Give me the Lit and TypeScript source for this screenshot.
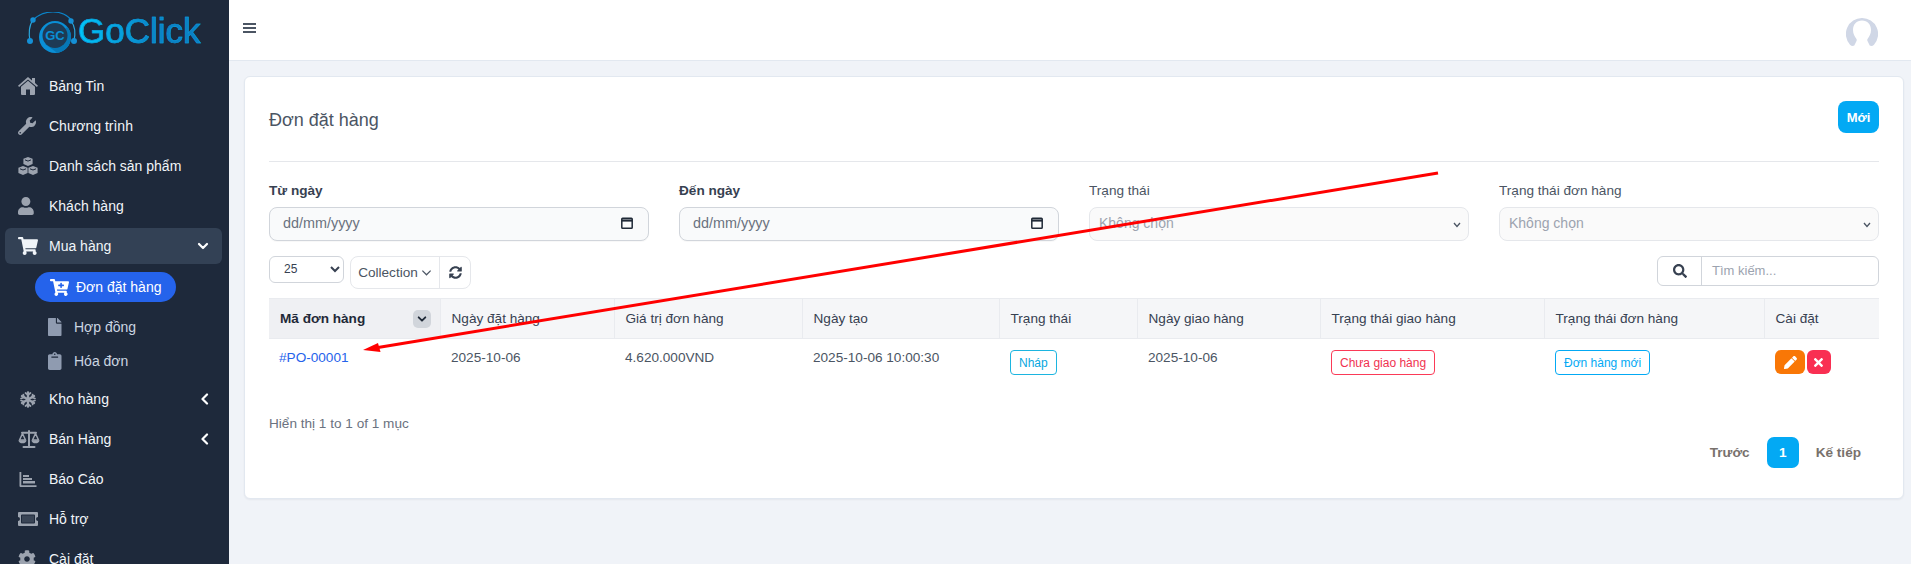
import { LitElement, html, css, svg } from "lit";
import { customElement } from "lit/decorators.js";

const FA = (vb: string, d: string, cls = "ic") =>
  html`<svg class=${cls} viewBox=${vb} preserveAspectRatio="xMinYMid meet" fill="currentColor"><path d=${d}></path></svg>`;

const CART = "M528.12 301.319l47.273-208C578.806 78.301 567.391 64 551.99 64H159.208l-9.166-44.81C147.758 8.021 137.93 0 126.529 0H24C10.745 0 0 10.745 0 24v16c0 13.255 10.745 24 24 24h69.883l70.248 343.435C147.325 417.1 136 435.222 136 456c0 30.928 25.072 56 56 56s56-25.072 56-56c0-15.674-6.447-29.835-16.824-40h209.647C430.447 426.165 424 440.326 424 456c0 30.928 25.072 56 56 56s56-25.072 56-56c0-22.172-12.888-41.332-31.579-50.405l5.517-24.276c3.413-15.018-8.002-29.319-23.403-29.319H218.117l-6.545-32h293.145c11.206 0 20.92-7.754 23.403-18.681z";
const CARTPLUS = "M504.717 320H211.572l6.545 32h268.418c15.401 0 26.816 14.301 23.403 29.319l-5.517 24.276C523.112 414.668 536 433.828 536 456c0 31.202-25.519 56.444-56.824 55.994-29.823-.429-54.35-24.631-55.155-54.447-.44-16.287 6.085-31.049 16.803-41.548H231.176C241.553 426.165 248 440.326 248 456c0 31.813-26.528 57.431-58.67 55.938-28.54-1.325-51.751-24.385-53.251-52.917-1.158-22.034 10.436-41.455 28.051-51.586L93.883 64H24C10.745 64 0 53.255 0 40V24C0 10.745 10.745 0 24 0h102.529c11.401 0 21.228 8.021 23.513 19.19L159.208 64H551.99c15.401 0 26.816 14.301 23.403 29.319l-47.273 208C525.637 312.246 515.923 320 504.717 320zM408 168h-48v-40c0-8.837-7.163-16-16-16h-16c-8.837 0-16 7.163-16 16v40h-48c-8.837 0-16 7.163-16 16v16c0 8.837 7.163 16 16 16h48v40c0 8.837 7.163 16 16 16h16c8.837 0 16-7.163 16-16v-40h48c8.837 0 16-7.163 16-16v-16c0-8.837-7.163-16-16-16z";

const icons: Record<string, unknown> = {
  home: html`<svg class="ic" viewBox="0 0 20 18" fill="currentColor"><path d="M10 0l4 3.400V1h3v5l3 2.700-1.100 1.300L10 2.400 1.100 10 0 8.700z"></path><path d="M10 3.800l7 6V17a1 1 0 0 1-1 1h-4v-5.500H8V18H4a1 1 0 0 1-1-1V9.800z"></path></svg>`,
  wrench: FA("0 0 512 512", "M507.73 109.1c-2.24-9.03-13.54-12.09-20.12-5.51l-74.36 74.36-67.88-11.31-11.31-67.88 74.36-74.36c6.62-6.62 3.43-17.9-5.66-20.16-47.38-11.74-99.55.91-136.58 37.93-39.64 39.64-50.55 97.1-34.05 147.2L18.74 402.76c-24.99 24.99-24.99 65.51 0 90.5 24.99 24.99 65.51 24.99 90.5 0l213.21-213.21c50.12 16.71 107.47 5.68 147.37-34.22 37.07-37.07 49.7-89.32 37.91-136.73zM64 472c-13.25 0-24-10.75-24-24 0-13.26 10.75-24 24-24s24 10.74 24 24c0 13.25-10.75 24-24 24z"),
  cubes: html`<svg class="ic" viewBox="0 .5 20 18" fill="currentColor"><path d="M10 .5l4.600 1.800v5.200L10 9.400 5.400 7.500V2.300z M5 9.500l4.600 1.800v5.300L5 18.500.4 16.600v-5.300z M15 9.500l4.600 1.800v5.300L15 18.500l-4.600-1.900v-5.300z"></path><path d="M7 3.400L10 4.600l3-1.200M2 12.300L5 13.500l3-1.200M12 12.300l3 1.200 3-1.200" fill="none" stroke="#1e293b" stroke-width="1"></path></svg>`,
  user: FA("0 0 448 512", "M224 256c70.7 0 128-57.3 128-128S294.7 0 224 0 96 57.3 96 128s57.3 128 128 128zm89.6 32h-16.7c-22.2 10.2-46.9 16-72.9 16s-50.6-5.8-72.9-16h-16.7C60.2 288 0 348.2 0 422.4V464c0 26.500 21.500 48 48 48h352c26.500 0 48-21.500 48-48v-41.600c0-74.200-60.200-134.400-134.400-134.400z"),
  cart: FA("0 0 576 512", CART),
  snow: html`<svg class="ic snow" viewBox="0 0 16 17" fill="none" stroke="currentColor" stroke-width="2.400" stroke-linecap="round"><path d="M8 1.500v14M2 5l12 7M14 5L2 12"></path><path d="M5.500 2L8 4l2.500-2M5.500 15L8 13l2.500 2M1 7.500l3-1-.7-3M15 7.500l-3-1 .7-3M1 9.500l3 1-.7 3M15 9.500l-3 1 .7 3" stroke-width="1.700"></path></svg>`,
  scale: html`<svg class="ic scale" viewBox="0 0 22 18" fill="none" stroke="currentColor" stroke-width="1.500" stroke-linejoin="round"><path d="M11 1v15M5.500 17h11M4 2.800h14" stroke-width="2" stroke-linecap="round"></path><path d="M4.500 3.500L1.500 10h6zM17.500 3.500l-3 6.500h6z"></path><path d="M.5 10.200h8c0 2-1.800 3.100-4 3.100s-4-1.100-4-3.100zM13.500 10.200h8c0 2-1.800 3.100-4 3.100s-4-1.100-4-3.100z" fill="currentColor" stroke="none"></path></svg>`,
  chart: html`<svg class="ic chart" viewBox="0 0 17 15" fill="currentColor"><path d="M0 0h1.800v13.200H17V15H1a1 1 0 0 1-1-1z"></path><rect x="3.500" y="3" width="6" height="2"></rect><rect x="3.500" y="6" width="9" height="2"></rect><rect x="3.500" y="9" width="12" height="2.500"></rect></svg>`,
  ticket: html`<svg class="ic ticket" viewBox="0 0 20 14"><path fill="currentColor" fill-rule="evenodd" d="M1 0h18a1 1 0 0 1 1 1v4a2 2 0 0 0 0 4v4a1 1 0 0 1-1 1H1a1 1 0 0 1-1-1V9a2 2 0 0 0 0-4V1a1 1 0 0 1 1-1zM4 2.500a1 1 0 0 0-1 1v7a1 1 0 0 0 1 1h12a1 1 0 0 0 1-1v-7a1 1 0 0 0-1-1z"></path><rect x="4" y="3.500" width="12" height="7" fill="#3a4556"></rect></svg>`,
  cog: FA("0 0 512 512", "M487.400 315.700l-42.600-24.600c4.300-23.200 4.300-47 0-70.200l42.600-24.600c4.900-2.800 7.100-8.600 5.500-14-11.100-35.600-30-67.800-54.700-94.600-3.800-4.100-10-5.100-14.800-2.300L380.800 110c-17.900-15.400-38.500-27.300-60.800-35.100V25.800c0-5.600-3.900-10.500-9.400-11.700-36.700-8.200-74.300-7.800-109.200 0-5.500 1.200-9.400 6.100-9.400 11.700V75c-22.200 7.900-42.800 19.800-60.800 35.100L88.700 85.500c-4.900-2.800-11-1.900-14.800 2.300-24.700 26.700-43.600 58.900-54.700 94.600-1.700 5.400.6 11.200 5.500 14L67.300 221c-4.300 23.200-4.300 47 0 70.200l-42.600 24.600c-4.900 2.800-7.100 8.600-5.500 14 11.100 35.600 30 67.800 54.700 94.600 3.800 4.100 10 5.100 14.800 2.300l42.600-24.600c17.900 15.400 38.500 27.300 60.800 35.100v49.200c0 5.600 3.900 10.500 9.400 11.700 36.700 8.200 74.300 7.800 109.200 0 5.500-1.200 9.400-6.100 9.400-11.700v-49.200c22.200-7.900 42.800-19.800 60.800-35.100l42.600 24.600c4.900 2.800 11 1.900 14.800-2.300 24.700-26.700 43.600-58.900 54.700-94.600 1.500-5.500-.7-11.300-5.600-14.100zM256 336c-44.100 0-80-35.900-80-80s35.900-80 80-80 80 35.900 80 80-35.900 80-80 80z"),
};

const chevDown = html`<svg class="chev" viewBox="0 0 12 12" fill="none" stroke="currentColor" stroke-width="2.200" stroke-linecap="round" stroke-linejoin="round"><path d="M2 4l4 4 4-4"></path></svg>`;
const chevLeft = html`<svg class="chev left" viewBox="0 0 12 12" fill="none" stroke="currentColor" stroke-width="2.200" stroke-linecap="round" stroke-linejoin="round"><path d="M8 1.500L3.500 6 8 10.500"></path></svg>`;
const calendar = html`<svg class="cal" viewBox="0 0 14 14" fill="none" stroke="#1f2937" stroke-width="1.500"><rect x="1.800" y="2.200" width="10.400" height="10" rx=".8"></rect><path d="M1.800 4.500h10.400" stroke-width="2.200"></path></svg>`;
const selChev = html`<svg class="selchev" viewBox="0 0 8 6" fill="none" stroke="#4b5563" stroke-width="1.300"><path d="M1 1l3 3.500L7 1"></path></svg>`;

const nav = [
  ["home", "Bảng Tin"],
  ["wrench", "Chương trình"],
  ["cubes", "Danh sách sản phẩm"],
  ["user", "Khách hàng"],
];
const cols = [171, 174, 188, 197, 138, 183, 224, 220, 115];
const heads = ["Ngày đặt hàng", "Giá trị đơn hàng", "Ngày tạo", "Trạng thái", "Ngày giao hàng", "Trạng thái giao hàng", "Trạng thái đơn hàng", "Cài đặt"];

@customElement("app-root")
export class AppRoot extends LitElement {
  static styles = css`
    :host { display: flex; height: 564px; overflow: hidden; background: #f0f3f8; font-family: "Liberation Sans", Arial, sans-serif; font-size: 14px; color: #374151; position: relative; }
    * { box-sizing: border-box; }
    .side { width: 229px; flex: none; background: #1e293b; color: #f1f5f9; overflow: hidden; }
    .logo { height: 66px; display: flex; align-items: flex-start; padding: 12px 0 0 27px; }
    .logo svg { width: 51px; height: 42px; flex: none; }
    .logo span { font-size: 35px; font-weight: 400; line-height: 40px; margin-top: -1px; -webkit-text-stroke: .6px #0a9ad8; background: linear-gradient(90deg, #00c8fb, #0a84c8 60%, #0b7fc4); -webkit-background-clip: text; background-clip: text; color: transparent; }
    .item { height: 40px; display: flex; align-items: center; padding-left: 18px; }
    .ic { width: 20px; height: 18px; color: #9ca3af; flex: none; display: block; }
    .ic.snow { height: 17px; }
    .ic.scale { width: 22px; }
    .ic.chart { height: 15px; }
    .ic.ticket { height: 14px; }
    .item .lab { margin-left: 11px; flex: 1; }
    .item .ic.scale + .lab { margin-left: 9px; }
    .chev { width: 12px; height: 12px; margin-right: 20px; color: #fff; flex: none; }
    .chev.left { margin-right: 18px; }
    .open { height: 36px; margin: 2px 7px 2px 5px; padding: 0 0 1px 13px; background: #334155; border-radius: 6px; }
    .open .ic { color: #f1f5f9; }
    .open .chev { margin-right: 13px; }
    .sub { padding: 6px 0 1px; }
    .pill { width: 141px; height: 30px; margin: 0 0 8px 35px; padding-left: 15px; display: flex; align-items: center; gap: 7px; border-radius: 15px; background: #2563eb; color: #fff; }
    .pill .ic { width: 19px; height: 17px; color: #fff; }
    .subitem { height: 34px; display: flex; align-items: center; padding-left: 48px; color: #cbd5e1; }
    .subitem .ic { width: 14px; height: 18px; color: #8f9bb0; }
    .subitem span { margin-left: 12px; }
    .main { flex: 1; min-width: 0; display: flex; flex-direction: column; }
    .top { height: 61px; flex: none; background: #fff; border-bottom: 1px solid #e2e8f0; display: flex; align-items: center; justify-content: space-between; padding: 0 33px 0 14px; }
    .burger { width: 13px; display: flex; flex-direction: column; gap: 2.500px; margin-top: -4px; }
    .burger i { display: block; height: 1.500px; background: #4b5563; }
    .avatar { width: 32px; height: 28px; display: block; margin-top: 3px; }
    .wrap { padding: 15px 7px 0 15px; }
    .card { height: 423px; background: #fff; border: 1px solid #e2e8f0; border-radius: 6px; padding: 24px 24px 0; box-shadow: 0 1px 2px rgba(15,23,42,.05); }
    .head { display: flex; justify-content: space-between; padding-bottom: 28px; border-bottom: 1px solid #e5e7eb; }
    .title { font-size: 18px; line-height: 22px; margin-top: 8px; color: #4b5563; }
    .new { width: 41px; height: 32px; border: 0; border-radius: 8px; background: #03a9f4; color: #fff; font: 700 13px "Liberation Sans", Arial, sans-serif; padding: 0; }
    .filters { display: grid; grid-template-columns: repeat(4, 380px); gap: 30px; margin-top: 19px; font-size: 13.600px; }
    .fld label { display: block; line-height: 20px; margin-bottom: 6px; color: #4b5563; }
    .fld label.b { font-weight: 700; color: #374151; }
    .inp { height: 34px; border: 1px solid #d1d5db; border-radius: 8px; background: #f9fafb; display: flex; align-items: center; justify-content: space-between; padding: 0 14px 2px 13px; color: #6b7280; font-size: 14.400px; box-shadow: 0 1px 1px rgba(0,0,0,.03); }
    .cal { width: 14px; height: 14px; }
    .selwrap { position: relative; }
    .selwrap select { appearance: none; width: 100%; height: 34px; border: 1px solid #e5e7eb; border-radius: 8px; background: #fafafa; color: #9ca3af; font: 14px "Liberation Sans", Arial, sans-serif; padding: 0 20px 3px 9px; }
    .selchev { position: absolute; right: 8px; top: 15px; width: 8px; height: 6px; }
    .bar { display: flex; align-items: flex-start; margin-top: 15px; }
    .size { width: 75px; height: 27px; border: 1px solid #d1d5db; border-radius: 6px; background: #fff; color: #374151; font: 12px "Liberation Sans", Arial, sans-serif; padding: 0 0 2px 10px; }
    .group { display: flex; height: 33px; margin-left: 6px; border: 1px solid #e5e7eb; border-radius: 8px; align-items: center; font-size: 13.600px; }
    .coll { width: 89px; height: 100%; display: flex; align-items: center; justify-content: center; gap: 3px; border-right: 1px solid #e5e7eb; color: #4b5563; }
    .coll svg { width: 11px; height: 11px; }
    .refresh { width: 30px; display: flex; justify-content: center; color: #374151; }
    .refresh svg { width: 13px; height: 13px; }
    .search { margin-left: auto; width: 222px; height: 30px; display: flex; border: 1px solid #d1d5db; border-radius: 6px; }
    .search .mag { width: 44px; display: flex; align-items: center; justify-content: center; border-right: 1px solid #d1d5db; color: #374151; }
    .search .mag svg { width: 14px; height: 14px; }
    .search .ph { padding-left: 10px; font-size: 13px; line-height: 28px; color: #9ca3af; }
    table { margin-top: 9px; width: 1610px; border-collapse: collapse; table-layout: fixed; font-size: 13.600px; }
    th { height: 40px; padding: 0 11px; text-align: left; font-weight: 400; background: #f5f6f8; border: 1px solid #e9ebef; border-width: 1px 1px 1px 0; color: #374151; }
    th.first { background: #eff0f3; font-weight: 700; color: #1f2937; }
    th.last { border-right: 0; }
    .thf { display: flex; align-items: center; justify-content: space-between; }
    .sort { width: 18px; height: 18px; border-radius: 5px; background: #d1d5db; display: flex; align-items: center; justify-content: center; margin-right: -2px; color: #1f2937; }
    .sort svg { width: 10px; height: 10px; margin: 0; color: #1f2937; }
    td { padding: 9px 11px 0; line-height: 20px; vertical-align: top; color: #4b5563; height: 60px; }
    td a { color: #2563eb; text-decoration: none; margin-left: -1px; }
    .badge { display: inline-flex; align-items: center; height: 25px; margin-top: 2px; padding: 0 8px; font-size: 12px; border-radius: 4px; border: 1px solid; }
    .b-info { color: #06a7e0; border-color: #1cb5e0; }
    .b-danger { color: #f0324f; border-color: #fb3a57; }
    .b-blue { color: #03a9f4; border-color: #03a9f4; }
    .acts { display: flex; gap: 2px; margin-top: 2px; }
    .acts span { height: 24px; border-radius: 6px; display: flex; align-items: center; justify-content: center; color: #fff; }
    .acts .ed { width: 30px; background: #f97706; }
    .acts .ed svg { width: 13px; height: 13px; }
    .acts .del { width: 24px; background: #f92f52; }
    .acts .del svg { width: 10px; height: 13px; }
    .info { margin-top: 15px; line-height: 20px; font-size: 13.600px; color: #6b7280; }
    .pager { display: flex; justify-content: flex-end; align-items: center; margin-top: 3px; padding-right: 18px; font-weight: 700; font-size: 13.600px; color: #78716c; }
    .pager .one { width: 32px; height: 31px; margin: 0 17px; border-radius: 7px; background: #03a9f4; color: #fff; display: flex; align-items: center; justify-content: center; }
    .arrow { position: absolute; left: 0; top: 0; width: 1911px; height: 564px; pointer-events: none; }
  `;

  render() {
    return html`
      <aside class="side">
        <div class="logo">
          <svg viewBox="0 0 51 42">
            <path d="M6 8C12 2 20 0 26 0s14 2 19 9" fill="none" stroke="#0b84c9" stroke-width="1.200"></path>
            <path d="M6 8C2 13 1.500 22 3 29M44 9c4 5 4.500 13 3 20" fill="none" stroke="#2aa6dc" stroke-width="1.200"></path>
            <circle cx="28" cy="25" r="16" fill="#0a8fd6"></circle>
            <path d="M40.500 35a16 16 0 0 0 0-20L18 32l12 8.800c4-.5 8-2.500 10.500-5.800z" fill="#0677b6"></path>
            <circle cx="28" cy="23.500" r="12.500" fill="#1e3a54"></circle>
            <text x="28" y="28" text-anchor="middle" font-size="13" font-weight="700" font-family="Liberation Sans" fill="#0a8fd6">GC</text>
            <circle cx="6" cy="8" r="2.700" fill="#1590d6"></circle>
            <circle cx="3" cy="29" r="3" fill="#1590d6"></circle>
            <circle cx="47" cy="29" r="3" fill="#1590d6"></circle>
            <circle cx="44" cy="9" r="2.700" fill="#1590d6"></circle>
          </svg>
          <span>GoClick</span>
        </div>
        ${nav.map(([ic, t]) => html`<div class="item">${icons[ic]}<span class="lab">${t}</span></div>`)}
        <div class="item open">${icons.cart}<span class="lab">Mua hàng</span>${chevDown}</div>
        <div class="sub">
          <div class="pill">${FA("0 0 576 512", CARTPLUS)}<span>Đơn đặt hàng</span></div>
          <div class="subitem">${FA("0 0 384 512", "M224 136V0H24C10.700 0 0 10.700 0 24v464c0 13.300 10.700 24 24 24h336c13.300 0 24-10.700 24-24V160H248c-13.200 0-24-10.800-24-24zm160-14.100v6.100H256V0h6.100c6.400 0 12.500 2.500 17 7l97.900 98c4.500 4.500 7 10.600 7 16.900z")}<span>Hợp đồng</span></div>
          <div class="subitem">${FA("0 0 384 512", "M384 112v352c0 26.510-21.490 48-48 48H48c-26.510 0-48-21.490-48-48V112c0-26.510 21.490-48 48-48h80c0-35.290 28.710-64 64-64s64 28.710 64 64h80c26.510 0 48 21.490 48 48zM192 40c-13.255 0-24 10.745-24 24s10.745 24 24 24 24-10.745 24-24-10.745-24-24-24m96 114v-20a6 6 0 0 0-6-6H102a6 6 0 0 0-6 6v20a6 6 0 0 0 6 6h180a6 6 0 0 0 6-6z")}<span>Hóa đơn</span></div>
        </div>
        <div class="item">${icons.snow}<span class="lab">Kho hàng</span>${chevLeft}</div>
        <div class="item">${icons.scale}<span class="lab">Bán Hàng</span>${chevLeft}</div>
        <div class="item">${icons.chart}<span class="lab">Báo Cáo</span></div>
        <div class="item">${icons.ticket}<span class="lab">Hỗ trợ</span></div>
        <div class="item">${icons.cog}<span class="lab">Cài đặt</span></div>
      </aside>
      <div class="main">
        <header class="top">
          <div class="burger"><i></i><i></i><i></i></div>
          <svg class="avatar" viewBox="0 0 32 28">
            <path d="M16 0a16 16 0 0 0-12 26.700c1.200 1.300 3 1.500 4.300.8L10.500 23c.4-.8.300-1.500-.2-2.200C8.800 18.800 7 15.800 7 12c0-5.500 3.500-9.500 9-9.500s9 4 9 9.500c0 3.800-1.800 6.800-3.300 8.800-.5.700-.6 1.400-.2 2.200l2.200 4.500c1.300.7 3.100.5 4.300-.8A16 16 0 0 0 16 0z" fill="#d0d7e6"></path>
          </svg>
        </header>
        <div class="wrap">
          <section class="card">
            <div class="head"><div class="title">Đơn đặt hàng</div><button class="new">Mới</button></div>
            <div class="filters">
              <div class="fld"><label class="b">Từ ngày</label><div class="inp"><span>dd/mm/yyyy</span>${calendar}</div></div>
              <div class="fld"><label class="b">Đến ngày</label><div class="inp"><span>dd/mm/yyyy</span>${calendar}</div></div>
              <div class="fld"><label>Trạng thái</label><div class="selwrap"><select><option>Không chọn</option></select>${selChev}</div></div>
              <div class="fld"><label>Trạng thái đơn hàng</label><div class="selwrap"><select><option>Không chọn</option></select>${selChev}</div></div>
            </div>
            <div class="bar">
              <select class="size"><option>25</option></select>
              <div class="group">
                <div class="coll"><span>Collection</span><svg viewBox="0 0 12 12" fill="none" stroke="currentColor" stroke-width="1.300"><path d="M1.500 4l4.500 4.500L10.500 4"></path></svg></div>
                <div class="refresh">${FA("0 0 512 512", "M370.720 133.280C339.458 104.008 298.888 87.962 255.848 88c-77.458.068-144.328 53.178-162.791 126.850-1.344 5.363-6.122 9.150-11.651 9.150H24.103c-7.498 0-13.194-6.807-11.807-14.176C33.933 94.924 134.813 8 256 8c66.448 0 126.791 26.136 171.315 68.685L463.030 40.970C478.149 25.851 504 36.559 504 57.941V192c0 13.255-10.745 24-24 24H345.941c-21.382 0-32.090-25.851-16.971-40.971l41.750-41.749zM32 296h134.059c21.382 0 32.090 25.851 16.971 40.971l-41.750 41.750c31.262 29.273 71.835 45.319 114.876 45.280 77.418-.070 144.315-53.144 162.787-126.849 1.344-5.363 6.122-9.150 11.651-9.150h57.304c7.498 0 13.194 6.807 11.807 14.176C478.067 417.076 377.187 504 256 504c-66.448 0-126.791-26.136-171.315-68.685L48.970 471.030C33.851 486.149 8 475.441 8 454.059V320c0-13.255 10.745-24 24-24z", "")}</div>
              </div>
              <div class="search">
                <div class="mag">${FA("0 0 512 512", "M505 442.700L405.300 343c-4.500-4.500-10.600-7-17-7H372c27.600-35.300 44-79.700 44-128C416 93.100 322.900 0 208 0S0 93.100 0 208s93.100 208 208 208c48.300 0 92.700-16.400 128-44v16.300c0 6.400 2.500 12.500 7 17l99.700 99.700c9.400 9.400 24.600 9.400 33.900 0l28.300-28.300c9.400-9.400 9.400-24.600.1-34zM208 336c-70.700 0-128-57.200-128-128 0-70.700 57.200-128 128-128 70.700 0 128 57.200 128 128 0 70.700-57.200 128-128 128z", "")}</div>
                <div class="ph">Tìm kiếm...</div>
              </div>
            </div>
            <table>
              <colgroup>${cols.map((w) => html`<col style="width:${w}px" />`)}</colgroup>
              <thead><tr>
                <th class="first"><div class="thf"><span>Mã đơn hàng</span><span class="sort">${chevDown}</span></div></th>
                ${heads.map((h, i) => html`<th class=${i === heads.length - 1 ? "last" : ""}>${h}</th>`)}
              </tr></thead>
              <tbody><tr>
                <td><a href="#">#PO-00001</a></td>
                <td>2025-10-06</td>
                <td>4.620.000VND</td>
                <td>2025-10-06 10:00:30</td>
                <td><span class="badge b-info">Nháp</span></td>
                <td>2025-10-06</td>
                <td><span class="badge b-danger">Chưa giao hàng</span></td>
                <td><span class="badge b-blue">Đơn hàng mới</span></td>
                <td><div class="acts">
                  <span class="ed">${FA("0 0 512 512", "M497.900 142.100l-46.100 46.100c-4.700 4.700-12.300 4.700-17 0l-111-111c-4.700-4.700-4.700-12.300 0-17l46.100-46.100c18.700-18.700 49.100-18.700 67.900 0l60.100 60.100c18.800 18.700 18.800 49.100 0 67.900zM284.200 99.800L21.600 362.400.4 483.900c-2.900 16.400 11.400 30.600 27.800 27.800l121.500-21.300 262.600-262.600c4.700-4.700 4.700-12.300 0-17l-111-111c-4.800-4.700-12.400-4.700-17.100 0z", "")}</span>
                  <span class="del">${FA("0 0 352 512", "M242.720 256l100.070-100.070c12.280-12.280 12.280-32.190 0-44.480l-22.240-22.240c-12.280-12.280-32.190-12.280-44.480 0L176 189.280 75.930 89.210c-12.280-12.280-32.190-12.280-44.480 0L9.210 111.450c-12.280 12.280-12.280 32.190 0 44.480L109.280 256 9.210 356.070c-12.280 12.280-12.280 32.190 0 44.480l22.240 22.240c12.280 12.280 32.200 12.280 44.480 0L176 322.720l100.070 100.070c12.280 12.280 32.200 12.280 44.480 0l22.240-22.240c12.280-12.280 12.280-32.190 0-44.480L242.720 256z", "")}</span>
                </div></td>
              </tr></tbody>
            </table>
            <div class="info">Hiển thị 1 to 1 of 1 mục</div>
            <div class="pager"><span>Trước</span><span class="one">1</span><span>Kế tiếp</span></div>
          </section>
        </div>
      </div>
      <svg class="arrow" viewBox="0 0 1911 564">
        ${svg`<path d="M1438 173L378 347.500" stroke="#f00" stroke-width="3" fill="none"></path><path d="M363 350l15-7 2.500 9z" fill="#f00"></path>`}
      </svg>
    `;
  }
}
